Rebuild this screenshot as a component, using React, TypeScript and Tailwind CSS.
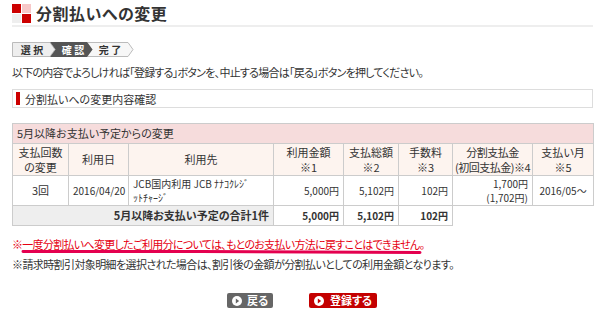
import React from "react";

const th = "border border-[#cccccc] bg-[#fdf4ef] px-0 text-center font-normal whitespace-nowrap leading-[15px] align-middle";
const td = "border border-[#cccccc] bg-white px-1 align-middle";

function PlayIcon({ color }: { color: string }) {
	return (
		<svg width="10" height="10" viewBox="0 0 10 10">
			<circle cx="5" cy="5" r="5" fill="#fff" />
			<polygon points="3.8,2.6 7.2,5 3.8,7.4" fill={color} />
		</svg>
	);
}

export default function App() {
	return (
		<div className="w-[600px] min-h-[326px] bg-white px-3 font-['Noto_Sans_CJK_JP',sans-serif] text-[#333333] [font-feature-settings:'palt']">
			{/* Title */}
			<div className="flex items-center gap-[5px] pt-[4px]">
				<div className="grid h-[19px] w-[19px] grid-cols-2 gap-[1px]">
					<span className="bg-[#cc0000]" />
					<span className="bg-[#f7c8c8]" />
					<span className="bg-[#eeeeee]" />
					<span className="bg-[#cc0000]" />
				</div>
				<h1 className="text-[16px] font-bold leading-[19px] tracking-[0.5px]">分割払いへの変更</h1>
			</div>
			<div className="mt-[2px] h-[2px] w-[581px] bg-[#eeeeee]" />

			{/* Steps */}
			<div className="mt-[15px] h-[15px]">
				<svg width="122" height="15" viewBox="0 0 122 15" className="text-[10px] font-bold">
					<polygon points="0.5,0.5 38,0.5 43,7.5 38,14.5 0.5,14.5" fill="#eeeeee" stroke="#bbbbbb" />
					<polygon points="116,0.5 121,7.5 116,14.5 75,14.5 80,7.5 75,0.5" fill="#f7f7f7" stroke="#bbbbbb" />
					<polygon points="38,0 75,0 80.5,7.5 75,15 38,15 43.5,7.5" fill="#555555" />
					<text x="20" y="11.5" textAnchor="middle" fill="#333">選 択</text>
					<text x="61" y="11.5" textAnchor="middle" fill="#fff">確 認</text>
					<text x="98" y="11.5" textAnchor="middle" fill="#333">完 了</text>
				</svg>
			</div>

			{/* Instruction */}
			<p className="mt-[8px] text-[11px] leading-[14px] tracking-[-0.75px]">
				以下の内容でよろしければ「登録する」ボタンを、中止する場合は「戻る」ボタンを押してください。
			</p>

			{/* Section heading */}
			<div className="mt-[10px] flex h-[19px] w-[581px] items-center gap-[5px] border border-[#dddddd] pl-[3px]">
				<span className="h-[13px] w-[4px] bg-[#cc0000]" />
				<span className="text-[11px] leading-[14px]">分割払いへの変更内容確認</span>
			</div>

			{/* Table */}
			<table className="mt-[15px] w-[581px] table-fixed border-collapse text-[11px]">
				<colgroup>
					<col className="w-[56px]" />
					<col className="w-[60px]" />
					<col className="w-[145px]" />
					<col className="w-[70px]" />
					<col className="w-[55px]" />
					<col className="w-[54px]" />
					<col className="w-[80px]" />
					<col className="w-[61px]" />
				</colgroup>
				<tbody>
					<tr className="h-[20px]">
						<td colSpan={8} className="border border-[#cccccc] bg-[#f6dcdc] px-1 leading-[15px]">
							5月以降お支払い予定からの変更
						</td>
					</tr>
					<tr className="h-[32px]">
						<th className={th}>支払回数<br />の変更</th>
						<th className={th}>利用日</th>
						<th className={th}>利用先</th>
						<th className={th}>利用金額<br />※1</th>
						<th className={th}>支払総額<br />※2</th>
						<th className={th}>手数料<br />※3</th>
						<th className={`${th} tracking-[-0.5px]`}>分割支払金<br />(初回支払金)※4</th>
						<th className={th}>支払い月<br />※5</th>
					</tr>
					<tr className="h-[30px]">
						<td className={`${td} text-center`}>3回</td>
						<td className={`${td} text-center text-[10px]`}>2016/04/20</td>
						<td className={`${td} text-[10px] leading-[14px]`}>
							JCB国内利用 JCB ﾅﾅｺｸﾚｼﾞ<br />ｯﾄﾁｬｰｼﾞ
						</td>
						<td className={`${td} text-right text-[10px]`}>5,000円</td>
						<td className={`${td} text-right text-[10px]`}>5,102円</td>
						<td className={`${td} text-right text-[10px]`}>102円</td>
						<td className={`${td} text-right text-[10px] leading-[14px]`}>
							1,700円<br />(1,702円)
						</td>
						<td className={`${td} text-center text-[10px]`}>2016/05～</td>
					</tr>
					<tr className="h-[20px]">
						<td colSpan={3} className="border border-[#cccccc] bg-[#eeeeee] px-1 text-right font-bold leading-[15px]">
							5月以降お支払い予定の合計1件
						</td>
						<td className={`${td} text-right text-[10px] font-bold leading-[15px]`}>5,000円</td>
						<td className={`${td} text-right text-[10px] font-bold leading-[15px]`}>5,102円</td>
						<td className={`${td} text-right text-[10px] font-bold leading-[15px]`}>102円</td>
					</tr>
				</tbody>
			</table>

			{/* Notes */}
			<div className="relative mt-[10px] w-fit">
				<p className="text-[11px] leading-[16px] tracking-[-0.7px] text-[#e60012]">
					※一度分割払いへ変更したご利用分については、もとのお支払い方法に戻すことはできません。
				</p>
				<svg width="402" height="6" viewBox="0 0 402 6" className="absolute left-[9px] top-[13px]">
					<path d="M2,2.5 C120,2 300,3 399,3.5" stroke="#e4004f" strokeWidth="3" strokeLinecap="round" fill="none" />
				</svg>
			</div>
			<p className="mt-[4px] text-[11px] leading-[16px] tracking-[-0.6px]">
				※請求時割引対象明細を選択された場合は、割引後の金額が分割払いとしての利用金額となります。
			</p>

			{/* Buttons */}
			<div className="mt-[21px] flex justify-center gap-9 pl-[4px]">
				<button className="flex h-[15px] w-[46px] items-center gap-[5px] rounded-[2px] bg-[#666666] pl-[5px] text-[11px] font-bold leading-none text-white">
					<PlayIcon color="#666666" />
					戻る
				</button>
				<button className="flex h-[15px] w-[68px] items-center gap-[6px] rounded-[2px] bg-[#c40000] pl-[5px] text-[11px] font-bold leading-none text-white">
					<PlayIcon color="#c40000" />
					登録する
				</button>
			</div>
		</div>
	);
}
